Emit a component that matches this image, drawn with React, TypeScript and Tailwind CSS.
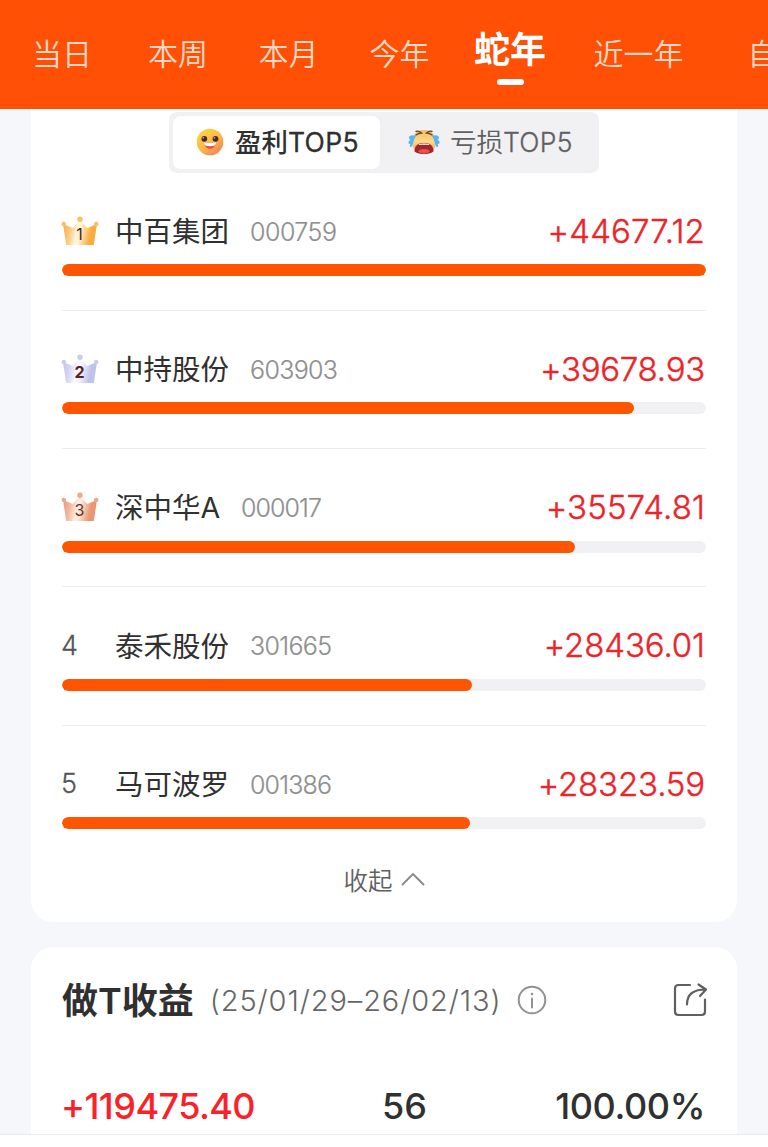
import clsx from 'clsx';

type Stock = {
  rank: number;
  name: string;
  code: string;
  profit: string;
  percent: number;
  codeClass: string;
  profitClass: string;
};

const tabs = [
  { label: '当日', className: 'ml-[32px]' },
  { label: '本周', className: 'ml-[56px]' },
  { label: '本月', className: 'ml-[50.5px]' },
  { label: '今年', className: 'ml-[51px]' },
  { label: '蛇年', className: 'ml-[44.5px]', active: true },
  { label: '近一年', className: 'ml-[47.5px]' },
  { label: '自', className: 'ml-[64px]' },
];

const stocks: Stock[] = [
  { rank: 1, name: '中百集团', code: '000759', profit: '+44677.12', percent: 100, codeClass: 'w-[87px]', profitClass: 'tracking-[0.15px]' },
  { rank: 2, name: '中持股份', code: '603903', profit: '+39678.93', percent: 88.8, codeClass: 'w-[88px]', profitClass: 'tracking-[-0.25px]' },
  { rank: 3, name: '深中华A', code: '000017', profit: '+35574.81', percent: 79.6, codeClass: 'w-[81px]', profitClass: 'tracking-[0.1px]' },
  { rank: 4, name: '泰禾股份', code: '301665', profit: '+28436.01', percent: 63.6, codeClass: 'w-[82px]', profitClass: 'tracking-[-0.1px]' },
  { rank: 5, name: '马可波罗', code: '001386', profit: '+28323.59', percent: 63.4, codeClass: 'w-[82px]', profitClass: 'tracking-[-0.15px]' },
];

const crownColors = [
  { edge: '#f9ac3c', middle: '#fff3d8', ball: '#f9c06c', text: '#4a2516' },
  { edge: '#bfc3ea', middle: '#f7f7ff', ball: '#c9cdec', text: '#5a2418' },
  { edge: '#e99672', middle: '#ffeadd', ball: '#eda98d', text: '#5b3327' },
];

function Crown({ rank }: { rank: number }) {
  const color = crownColors[rank - 1];
  const id = `crown-${rank}`;

  return (
    <svg width="38" height="30" viewBox="0 0 38 30" className="-ml-px -mt-[2px]">
      <defs>
        <linearGradient id={id} x1="0" y1="0" x2="1" y2="0.15">
          <stop offset="0" stopColor={color.edge} />
          <stop offset="0.2" stopColor={color.edge} stopOpacity="0.75" />
          <stop offset="0.45" stopColor={color.middle} />
          <stop offset="0.55" stopColor={color.middle} />
          <stop offset="0.88" stopColor={color.edge} />
        </linearGradient>
      </defs>
      <path d="M2 8 11.800 12 19 4l7.200 8L36 8l-3.200 21H5.200Z" fill={`url(#${id})`} />
      <circle cx="2.800" cy="8" r="2.300" fill={color.ball} />
      <circle cx="19" cy="3.200" r="2.700" fill={color.ball} />
      <circle cx="35.200" cy="8" r="2.300" fill={color.ball} />
      <text
        x="18.500"
        y="24"
        textAnchor="middle"
        fontSize="16"
        fontFamily="Inter, sans-serif"
        fontWeight={rank === 2 ? 700 : 400}
        fill={color.text}
      >
        {rank}
      </text>
    </svg>
  );
}

function SmileFace() {
  return (
    <svg width="28" height="28" viewBox="0 0 28 28">
      <defs>
        <linearGradient id="smile" x1="0.1" y1="0" x2="0.85" y2="1">
          <stop offset="0" stopColor="#ffd83f" />
          <stop offset="0.55" stopColor="#fbb84a" />
          <stop offset="1" stopColor="#f07c55" />
        </linearGradient>
      </defs>
      <circle cx="14" cy="14" r="13.300" fill="url(#smile)" />
      <circle cx="8.300" cy="10.800" r="2.900" fill="#4a2632" />
      <circle cx="19.500" cy="10.800" r="2.900" fill="#4a2632" />
      <circle cx="7.300" cy="9.800" r="0.900" fill="#b9a0aa" />
      <circle cx="18.500" cy="9.800" r="0.900" fill="#b9a0aa" />
      <path d="M8 14.200c3.800 1 8.200 1 12 0-.3 4-2.800 6.500-6 6.500s-5.700-2.500-6-6.500Z" fill="#e94b4a" />
      <path d="M8 14.200c3.800 1 8.200 1 12 0-.1 1.500-.5 2.600-1.300 3.400-2.800.7-6.600.7-9.400 0-.7-.8-1.200-2-1.300-3.400Z" fill="#fff" />
    </svg>
  );
}

function CryFace() {
  return (
    <svg width="32" height="26" viewBox="0 0 32 26">
      <defs>
        <linearGradient id="cry" x1="0" y1="0" x2="0" y2="1">
          <stop offset="0" stopColor="#f3bd62" />
          <stop offset="0.5" stopColor="#ffd88a" />
          <stop offset="1" stopColor="#eb9442" />
        </linearGradient>
      </defs>
      <path d="M16 1c7.500 0 12 5 12 12s-4.500 11.500-12 11.500S4 20 4 13 8.500 1 16 1Z" fill="url(#cry)" />
      <path d="M8 2.500c2-.9 3.700-.4 5.500 1.500-2 .1-3.800.7-5.500 2M24 2.500c-2-.9-3.700-.4-5.500 1.500 2 .1 3.800.7 5.500 2" fill="none" stroke="#70432e" strokeWidth="1.400" strokeLinecap="round" />
      <path d="M6.500 22.500c0-6 3.500-8.500 9.500-8.500s9.500 2.500 9.500 8.500c-2.500 2-6 2.500-9.500 2.500s-7-.5-9.500-2.500Z" fill="#a3242a" />
      <path d="M10.500 15.300c3-1 8-1 11 0l-.8.700c-3-.5-6.400-.5-9.400 0Z" fill="#fff" />
      <ellipse cx="16" cy="22.200" rx="5.500" ry="2.300" fill="#e8524d" />
      <path d="M8 7C4 5.500 1 6.500 1 9c0 1.500 1.500 2 2.500 1.700C2 11 0 12 .5 14c.4 1.300 1.700 1.300 2.500.8-1.500 1-1.700 2.700-.5 3.200C5 18.500 5 11 8 7ZM24 7c4-1.500 7-.5 7 2 0 1.500-1.500 2-2.500 1.700 2 .3 3.500 1.300 3 3.300-.4 1.300-1.700 1.300-2.500.8 1.500 1 1.700 2.700.5 3.200-2.500.5-2.500-7-5.500-11Z" fill="#55b5f4" />
    </svg>
  );
}

function StockRow({ stock }: { stock: Stock }) {
  return (
    <div className={clsx('h-[138.25px] pt-[35px]', stock.rank < 5 && 'border-b border-[#ededee]')}>
      <div className="flex h-[48px] items-center">
        <div className="flex w-[53px] shrink-0 items-center text-[#555]">
          {stock.rank <= 3 ? (
            <Crown rank={stock.rank} />
          ) : (
            <span className="-ml-px text-[27px] font-light [-webkit-text-stroke:0.3px]">{stock.rank}</span>
          )}
        </div>
        <span className="mt-px whitespace-nowrap text-[28.500px] leading-none text-[#303030]">{stock.name}</span>
        <svg height="30" className={clsx('ml-[21px] shrink-0 overflow-visible', stock.codeClass)}>
          <text x="0" y="24" textLength="100%" fontSize="25" fontWeight="300" fill="#8f8f8f" stroke="#8f8f8f" strokeWidth="0.2">
            {stock.code}
          </text>
        </svg>
        <span
          className={clsx(
            '-mt-px ml-auto mr-px text-[33px] font-light leading-none text-[#ec2429] [-webkit-text-stroke:0.4px]',
            stock.profitClass,
          )}
        >
          {stock.profit}
        </span>
      </div>
      <div className="mt-[8.500px] h-3 overflow-hidden rounded-full bg-[#f1f1f4]">
        <div className="h-full rounded-full bg-[#ff5500]" style={{ width: `${stock.percent}%` }} />
      </div>
    </div>
  );
}

export default function App() {
  return (
    <div className="flex h-[1147px] w-[768px] flex-col overflow-hidden bg-white font-['Inter','Noto_Sans_CJK_SC',sans-serif]">
      <header className="flex h-[108.500px] shrink-0 items-start overflow-hidden bg-[#ff5005]">
        {tabs.map((tab) => (
          <div
            key={tab.label}
            className={clsx(
              'flex shrink-0 flex-col items-center whitespace-nowrap leading-none',
              tab.className,
              tab.active ? 'pt-[32px] text-[36px] font-bold text-white' : 'pt-[39px] text-[30px] font-[350] text-[#ffd9c6]',
            )}
          >
            {tab.label}
            {tab.active && <span className="mt-[11px] h-[6px] w-[27px] rounded-full bg-white" />}
          </div>
        ))}
      </header>

      <main className="min-h-0 flex-1 overflow-hidden bg-[#f6f7fa] px-[31px]">
        <section className="h-[813px] rounded-b-[22px] bg-white px-[31px] pt-[3.500px]">
          <div className="mx-auto flex h-[60.500px] w-[430px] rounded-lg bg-[#f1f1f4] p-[4px]">
            <div className="flex w-[207px] items-center rounded-lg bg-white pl-[23px] text-[26.500px] font-medium text-[#303030]">
              <SmileFace />
              <span className="ml-[11px] mt-[2px] whitespace-nowrap">
                盈利<span className="tracking-[0.3px] [-webkit-text-stroke:0.3px] font-normal">TOP5</span>
              </span>
            </div>
            <div className="flex flex-1 items-center pl-[28px] text-[26.500px] font-[350] text-[#606060]">
              <CryFace />
              <span className="ml-[10px] mt-[2px] whitespace-nowrap">
                亏损<span className="tracking-[0.3px] [-webkit-text-stroke:0.3px]">TOP5</span>
              </span>
            </div>
          </div>

          {stocks.map((stock) => (
            <StockRow key={stock.code} stock={stock} />
          ))}

          <div className="-mt-px flex items-center justify-center text-[24.500px] font-[350] leading-[36px] text-[#606060]">
            收起
            <svg width="24" height="14" viewBox="0 0 24 14" className="-mt-[4px] ml-[8px]" fill="none" stroke="#888" strokeWidth="1.900">
              <path d="m1 13 11-11 11 11" />
            </svg>
          </div>
        </section>

        <section className="mt-[25.500px] h-[220px] rounded-t-[22px] bg-white px-[31px] pt-[29px]">
          <div className="flex h-[48px] items-center">
            <h2 className="mt-px whitespace-nowrap text-[36px] font-bold leading-none text-[#303030]">
              做<span className="font-semibold">T</span>收益
            </h2>
            <span className="ml-[16px] whitespace-nowrap text-[29px] font-light leading-none tracking-[0.9px] text-[#666]">
              (25/01/29–26/02/13)
            </span>
            <svg width="30" height="30" viewBox="0 0 30 30" className="ml-[15px]" fill="none" stroke="#929292" strokeWidth="2">
              <circle cx="15" cy="15" r="13.300" />
              <path d="M15 13.500v9" strokeLinecap="round" />
              <circle cx="15" cy="9" r="1.300" fill="#929292" stroke="none" />
            </svg>
            <svg width="36" height="36" viewBox="0 0 36 36" className="-mr-[2px] ml-auto" fill="none" stroke="#606060" strokeWidth="2.200" strokeLinecap="round" strokeLinejoin="round">
              <path d="M18 3H6.500Q3 3 3 6.500v23Q3 33 6.500 33h23q3.500 0 3.500-3.500V17.500" />
              <path d="M15 22.500C15 12 21 7.500 33.500 7.500M26.500 2.500l7.500 5-6 6.500" />
            </svg>
          </div>
          <div className="mt-[57.500px] flex text-[36px] font-medium leading-[48px] text-[#303030]">
            <span className="-ml-px w-[257px] tracking-[-0.55px] text-[#fa2229]">+119475.40</span>
            <span className="w-[173px] text-center">56</span>
            <span className="ml-auto mr-px tracking-[-0.4px]">100.00%</span>
          </div>
        </section>
      </main>
      <footer className="h-[13px] shrink-0 border-t border-[#ebebeb] bg-white" />
    </div>
  );
}
